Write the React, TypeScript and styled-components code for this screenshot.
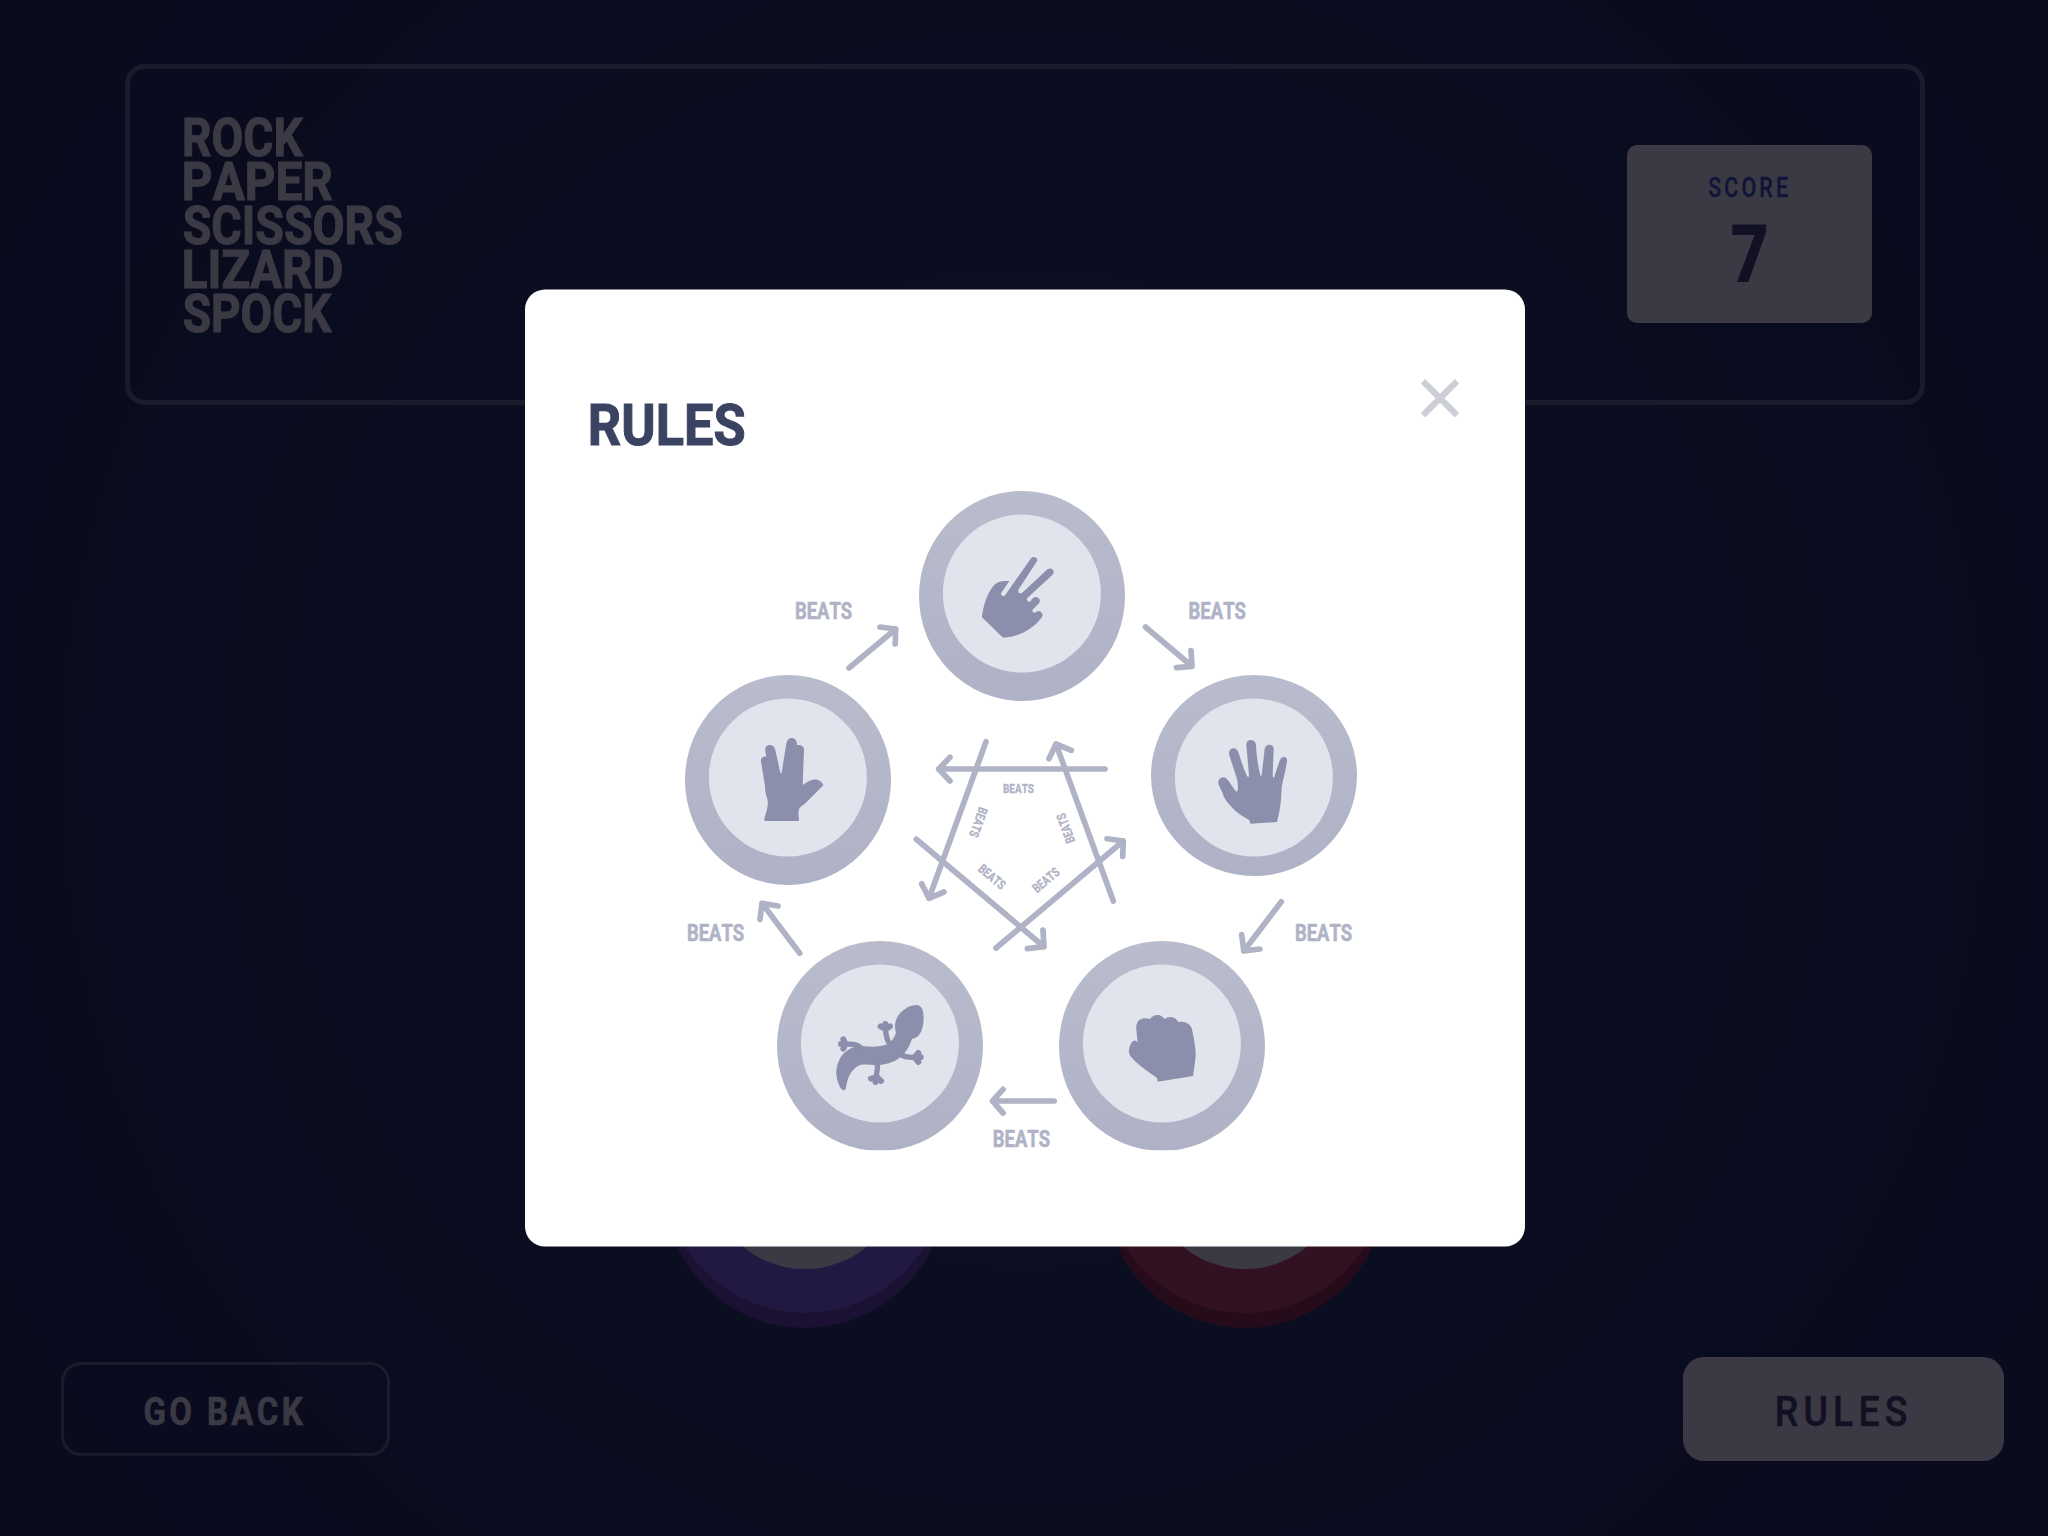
import React from "react";
import styled, { createGlobalStyle } from "styled-components";

const FONT = 'Roboto, "Liberation Sans", sans-serif';

const GlobalStyle = createGlobalStyle`
  * { box-sizing: border-box; }
  html, body { margin: 0; padding: 0; }
  body { font-family: ${FONT}; background: #141539; overflow: hidden; }
`;

/* ---------- condensed lettering ---------- */

const ctx = document.createElement("canvas").getContext("2d")!;

function condense(text: string, size: number, weight: number, spacing: number, width: number) {
  ctx.font = `${weight} ${size}px ${FONT}`;
  ctx.fontKerning = "none";
  const m = ctx.measureText(text);
  const ink = m.actualBoundingBoxLeft + m.actualBoundingBoxRight + spacing * (text.length - 1);
  return { scale: width / ink, shift: m.actualBoundingBoxLeft };
}

const Box = styled.span<{ $w: number; $lh: number; $dx: number }>`
  display: block;
  width: ${(p) => p.$w}px;
  height: ${(p) => p.$lh}px;
  line-height: ${(p) => p.$lh}px;
  margin-left: ${(p) => p.$dx}px;
  white-space: nowrap;
`;

const Glyphs = styled.span<{ $size: number; $weight: number; $ls: number; $stroke: number }>`
  display: inline-block;
  vertical-align: top;
  font-size: ${(p) => p.$size}px;
  font-weight: ${(p) => p.$weight};
  letter-spacing: ${(p) => p.$ls}px;
  font-kerning: none;
  -webkit-text-stroke: ${(p) => p.$stroke}px currentColor;
  transform-origin: 0 50%;
`;

type LabelProps = {
  text: string;
  size: number;
  weight?: number;
  ls?: number;
  stroke?: number;
  width: number;
  lh: number;
  dx?: number;
};

function Label({ text, size, weight = 700, ls = 0, stroke = 0, width, lh, dx = 0 }: LabelProps) {
  const { scale, shift } = condense(text, size, weight, ls, width - stroke);
  return (
    <Box $w={width} $lh={lh} $dx={dx}>
      <Glyphs
        $size={size}
        $weight={weight}
        $ls={ls}
        $stroke={stroke}
        style={{ transform: `translateX(${stroke / 2}px) scaleX(${scale}) translateX(${shift}px)` }}
      >
        {text}
      </Glyphs>
    </Box>
  );
}

/* ---------- page ---------- */

const Page = styled.main`
  width: 2048px;
  height: 1536px;
  display: flex;
  flex-direction: column;
  padding-top: 64px;
  background: radial-gradient(circle at 50% 50%, #1b3a5c 0%, #0f163c 100%);
`;

const Header = styled.header`
  width: 1800px;
  height: 341px;
  flex: none;
  margin-left: 125px;
  border: 5px solid #606e85;
  border-radius: 20px;
  display: flex;
  justify-content: space-between;
  align-items: flex-start;
  padding: 47px 48px 0 54px;
`;

const Logo = styled.div`
  display: flex;
  flex-direction: column;
  color: #fff;
`;

const ScoreCard = styled.section`
  width: 245px;
  height: 178px;
  margin-top: 29px;
  border-radius: 10px;
  background: #fff;
  display: flex;
  flex-direction: column;
  align-items: center;
  padding-top: 28px;
  color: #2a46c0;
`;

const ScoreValue = styled.div`
  margin-top: 14px;
  color: #32385d;
`;

const Board = styled.section`
  flex: none;
  height: 923px;
  display: flex;
  justify-content: center;
  align-items: flex-end;
  gap: 158px;
  padding: 0 0 15px 1px;
`;

const Token = styled.div<{ $face: string; $rim: string }>`
  width: 282px;
  height: 282px;
  border-radius: 50%;
  background: ${(p) => p.$face};
  box-shadow: 0 15px 0 ${(p) => p.$rim};
  display: grid;
  place-items: center;
`;

const TokenCore = styled.div`
  width: 194px;
  height: 194px;
  border-radius: 50%;
  background: #fdfdfd;
`;

const Footer = styled.footer`
  flex: none;
  display: flex;
  justify-content: space-between;
  align-items: center;
  margin-top: 29px;
  padding: 0 44px 0 61px;
`;

const GhostButton = styled.button`
  width: 329px;
  height: 94px;
  padding: 6px 3px 0 0;
  border: 3px solid #606e85;
  border-radius: 20px;
  background: transparent;
  color: #fff;
  font-family: ${FONT};
  display: flex;
  align-items: center;
  justify-content: center;
`;

const SolidButton = styled.button`
  width: 321px;
  height: 104px;
  padding: 6px 4px 0 0;
  border: 0;
  border-radius: 21px;
  background: #fff;
  color: #32385d;
  font-family: ${FONT};
  display: flex;
  align-items: center;
  justify-content: center;
`;

/* ---------- modal ---------- */

const Overlay = styled.div`
  position: fixed;
  inset: 0;
  display: flex;
  align-items: flex-start;
  justify-content: center;
  padding: 290px 0 0 1px;
  background: rgba(9, 8, 21, 0.8);
`;

const Modal = styled.section`
  width: 1000px;
  height: 957px;
  border-radius: 20px;
  background: #fff;
  display: flex;
  flex-direction: column;
  padding: 88px 65px 0;
  transform: translateY(-0.5px);
`;

const ModalHead = styled.div`
  display: flex;
  justify-content: space-between;
  align-items: flex-start;
  height: 113px;
  color: #3b4363;
`;

const ModalTitle = styled.h2`
  margin: 16px 0 0;
`;

const CloseButton = styled.button`
  padding: 0;
  border: 0;
  background: transparent;
  line-height: 0;
`;

const DiagramSlot = styled.div`
  padding-left: 95px;
  line-height: 0;
`;

/* ---------- rules diagram ---------- */

type Pt = [number, number];

function Arrow({ from, tip, wings }: { from: Pt; tip: Pt; wings: [Pt, Pt] }) {
  return (
    <path
      d={`M${from}L${tip}M${wings[0]}L${tip}L${wings[1]}`}
      fill="none"
      stroke="#b0b3c6"
      strokeWidth="5.7"
      strokeLinecap="round"
      strokeLinejoin="round"
    />
  );
}

function Beats({ x, y, size, width, angle = 0 }: { x: number; y: number; size: number; width: number; angle?: number }) {
  const stroke = size * 0.025;
  const { scale, shift } = condense("BEATS", size, 700, 0, width - stroke);
  return (
    <g
      transform={`translate(${x} ${y}) rotate(${angle}) translate(${(stroke - width) / 2} ${size * 0.3555}) scale(${scale} 1)`}
    >
      <text
        x={shift}
        y={0}
        fontFamily={FONT}
        fontSize={size}
        fontWeight={700}
        fill="#b0b3c6"
        stroke="#b0b3c6"
        strokeWidth={stroke}
        style={{ fontKerning: "none" }}
      >
        BEATS
      </text>
    </g>
  );
}

function Medal({ cx, cy, ry = 105, inner }: { cx: number; cy: number; ry?: number; inner: number }) {
  return (
    <>
      <ellipse cx={cx} cy={cy} rx="103" ry={ry} fill="url(#ring)" />
      <circle cx={cx - 0.1} cy={inner} r="79" fill="#e1e4ed" />
    </>
  );
}

const arrows: { from: Pt; tip: Pt; wings: [Pt, Pt] }[] = [
  { from: [1105, 769], tip: [938.7, 769], wings: [[950, 757.3], [950, 781]] },
  { from: [986, 741.8], tip: [929, 898.3], wings: [[921.7, 883.7], [944, 892]] },
  { from: [1113.3, 901], tip: [1056, 744], wings: [[1049, 758.7], [1071.3, 750.3]] },
  { from: [916.3, 839.3], tip: [1044, 946.7], wings: [[1043, 930], [1027.3, 948.7]] },
  { from: [996, 948], tip: [1123.3, 841], wings: [[1107, 838.8], [1122.7, 856.5]] },
  { from: [849, 668], tip: [895.7, 629], wings: [[880, 627], [895.2, 644]] },
  { from: [1145.5, 627], tip: [1192, 666.3], wings: [[1176.5, 667.7], [1191, 650.5]] },
  { from: [1281.3, 901.7], tip: [1243.8, 951], wings: [[1241.7, 934.5], [1260, 949]] },
  { from: [1054.2, 1101], tip: [992.5, 1101], wings: [[1003, 1089.3], [1003, 1113]] },
  { from: [799.7, 953.3], tip: [762, 903.3], wings: [[778, 906], [760, 919.5]] },
];

function RulesDiagram() {
  return (
    <svg width="672" height="680" viewBox="685 490.5 672 680">
      <defs>
        <linearGradient id="ring" x1="0" y1="0" x2="0" y2="1">
          <stop offset="0" stopColor="#b9bccc" />
          <stop offset="1" stopColor="#afb2c6" />
        </linearGradient>
        <clipPath id="floor">
          <rect x="685" y="490" width="672" height="660.3" />
        </clipPath>
      </defs>
      <g clipPath="url(#floor)">
        <Medal cx={1022} cy={596} inner={593.5} />
        <Medal cx={788} cy={780} inner={777.5} />
        <Medal cx={1254} cy={775.5} ry={100.5} inner={777.5} />
        <Medal cx={880} cy={1046} inner={1043.5} />
        <Medal cx={1162} cy={1046} inner={1043.5} />
      </g>

      <g fill="#8b8fac">
        {/* scissors */}
        <path
          transform="translate(900 480) scale(.33333)"
          d="M246 410C250 375 262 340 280 318C292 304 306 302 328 303L304 338C301 343 305 348 310 348C313 348 316 345 318 342L392 236C396 230 404 229 409 234C413 238 412 242 409 247L356 328C353 334 356 340 362 340C365 340 367 337 370 335L440 270C446 264 455 264 459 270C463 275 461 280 457 285L382 354C378 358 382 365 388 365C392 365 394 360 397 356C404 348 414 350 418 357C422 364 418 369 414 373L399 388C395 393 399 400 405 398C410 395 416 391 422 395C430 400 429 408 424 414C400 445 360 470 312 473Q309 473 306 470L246 412Z"
        />
        {/* spock */}
        <path
          transform="translate(670 660) scale(.33333)"
          d="M286 483Q281 482 283 476L290 452C293 440 295 430 292 418C288 404 285 392 285 378L273 304C271 296 277 288 289 290L286 274C284 262 290 255 299 255C308 255 314 260 316 270L331 338Q333 341 335 338L349 250C351 240 357 234 365 234C374 234 381 241 381 255C394 254 402 259 402 270L398 375L412 366C425 358 440 355 451 364Q460 371 460 375Q458 379 454 382L412 424C404 432 394 438 388 445C384 455 385 465 387 476Q388 483 383 483Z"
        />
        {/* paper */}
        <path
          transform="translate(1140 660) scale(.33333)"
          d="M331 491L328 480C310 470 290 458 274 440C262 428 250 412 248 400L236 374C232 364 238 354 248 352C256 352 262 358 268 366L285 391C288 396 292 396 293 390C295 378 293 368 291 357L268 286C265 274 270 266 280 265C288 265 293 271 296 279C303 302 310 325 321 348Q327 355 327 345L319 256C318 247 324 240 333 240C342 240 347 246 348 256C350 290 354 320 361 345Q363 350 365 345C368 320 371 295 374 266C376 258 381 254 388 254C396 254 401 259 401 267L398 345Q399 358 403 350C408 335 413 318 421 298C424 292 429 290 434 291C440 293 442 298 441 304C437 330 432 350 425 380C424 410 423 440 411 486Z"
        />
        {/* rock */}
        <path
          transform="translate(1040 930) scale(.33333)"
          d="M353 455L351 444C325 425 295 406 274 382C266 372 265 362 269 350C273 337 280 330 287 332Q291 334 293 338L289 300C288 282 292 270 307 266C315 264 323 265 330 267C337 258 345 254 354 255C363 256 369 261 373 267C382 261 392 259 402 263C409 267 413 271 415 276C432 274 449 280 455 294C462 325 467 350 467 375C466 395 462 415 459 438Z"
        />
        {/* lizard */}
        <g transform="translate(760 930) scale(.33333)">
          <path d="M251 481Q245 480 241 473C232 456 228 438 229 425C230 402 240 380 255 367C272 352 288 348 305 348C335 351 360 352 382 343C396 335 403 322 408 308C402 290 405 268 418 252C434 234 454 224 472 225C486 228 491 242 491 265C490 290 485 310 472 320C466 324 460 325 456 327C450 342 445 356 433 370C418 388 395 402 360 405C340 406 320 402 302 404C285 410 272 425 264 446C260 458 259 470 257 477Q255 481 251 481Z" />
          <g fill="none" stroke="#8b8fac" strokeLinecap="round" strokeLinejoin="round">
            <path
              strokeWidth="16"
              d="M391 345C380 330 377 315 377 298M305 355C290 341 278 343 256 342M352 400C354 415 351 425 349 436M420 372C435 382 448 383 462 382"
            />
            <path
              strokeWidth="18"
              d="M376 297L362 289M376 297V282M376 297L390 289M256 342L250 328M256 342H243M256 342L250 356M349 443L333 446M349 440L347 456M349 440L363 453M464 382L475 369M464 382H482M464 382L475 396"
            />
          </g>
        </g>
      </g>

      {arrows.map((a, i) => (
        <Arrow key={i} {...a} />
      ))}

      <Beats x={823.9} y={610.8} size={23} width={57} />
      <Beats x={1217.6} y={610.8} size={23} width={57} />
      <Beats x={715.9} y={932.8} size={23} width={57} />
      <Beats x={1323.9} y={932.8} size={23} width={57} />
      <Beats x={1021.8} y={1139} size={23} width={57} />

      <Beats x={1018.5} y={788.4} size={12.9} width={31.3} />
      <Beats x={978.5} y={822.3} size={12.9} width={31.3} angle={110} />
      <Beats x={1065.7} y={828.3} size={12.9} width={31.3} angle={-110} />
      <Beats x={992} y={876.7} size={12.9} width={31.3} angle={40} />
      <Beats x={1045.8} y={880} size={12.9} width={31.3} angle={-40} />
    </svg>
  );
}

const logoLines: { word: string; width: number; dx: number }[] = [
  { word: "ROCK", width: 119.7, dx: 0.1 },
  { word: "PAPER", width: 148.8, dx: 0.1 },
  { word: "SCISSORS", width: 219.3, dx: -1.2 },
  { word: "LIZARD", width: 157.8, dx: 0.3 },
  { word: "SPOCK", width: 149.5, dx: -1.2 },
];

export default function App() {
  return (
    <>
      <GlobalStyle />
      <Page>
        <Header>
          <Logo>
            {logoLines.map((l) => (
              <Label key={l.word} text={l.word} size={54.2} stroke={1} width={l.width} lh={44} dx={l.dx} />
            ))}
          </Logo>
          <ScoreCard>
            <Label text="SCORE" size={26.8} weight={500} ls={4} stroke={0.3} width={80} lh={30} dx={-3} />
            <ScoreValue>
              <Label text="7" size={78} stroke={2} width={35} lh={75} />
            </ScoreValue>
          </ScoreCard>
        </Header>
        <Board>
          <Token $face="#825ff5" $rim="#6437aa">
            <TokenCore />
          </Token>
          <Token $face="#d73755" $rim="#9b1932">
            <TokenCore />
          </Token>
        </Board>
        <Footer>
          <GhostButton>
            <Label text="GO BACK" size={39} ls={4} stroke={0.5} width={160} lh={46} />
          </GhostButton>
          <SolidButton>
            <Label text="RULES" size={43.4} weight={500} ls={6} stroke={0.5} width={129.5} lh={48} />
          </SolidButton>
        </Footer>
      </Page>
      <Overlay>
        <Modal>
          <ModalHead>
            <ModalTitle>
              <Label text="RULES" size={58.2} stroke={1.1} width={154.5} lh={62} dx={0.5} />
            </ModalTitle>
            <CloseButton aria-label="Close">
              <svg width="40" height="40" viewBox="0 0 40 40">
                <path d="M3 3.7L37 37.7M37 3.7L3 37.7" stroke="#cdcfd8" strokeWidth="6.2" />
              </svg>
            </CloseButton>
          </ModalHead>
          <DiagramSlot>
            <RulesDiagram />
          </DiagramSlot>
        </Modal>
      </Overlay>
    </>
  );
}
